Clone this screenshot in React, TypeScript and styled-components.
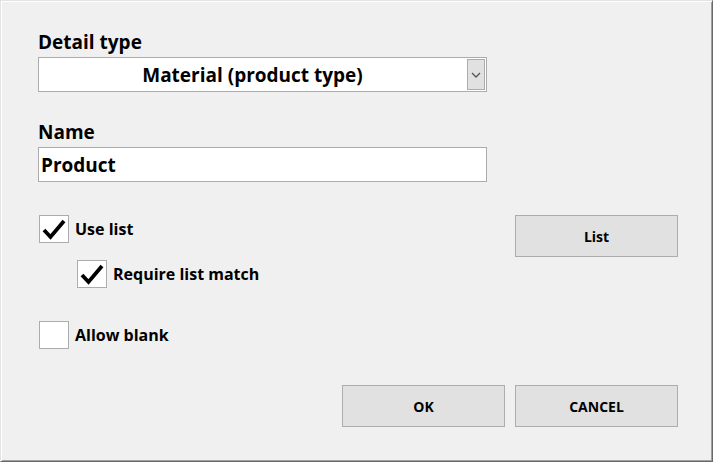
import React, { useState } from 'react'
import styled, { createGlobalStyle } from 'styled-components'

const GlobalStyle = createGlobalStyle`
  html, body {
    margin: 0;
    padding: 0;
    background: #f0f0f0;
  }
  * {
    box-sizing: border-box;
  }
`

function CheckMark() {
  return (
    <svg width="24" height="22" viewBox="0 0 24 22">
      <path d="M2 12 L8.5 19 L22 3" fill="none" stroke="#000" strokeWidth="3.8" strokeLinejoin="miter" />
    </svg>
  )
}

function Chevron() {
  return (
    <svg width="10" height="6" viewBox="0 0 10 6">
      <path d="M1 1 L5 5 L9 1" fill="none" stroke="#555" strokeWidth="1.3" />
    </svg>
  )
}

type CheckProps = {
  label: string
  checked: boolean
  onToggle: () => void
}

function CheckOption({ label, checked, onToggle }: CheckProps) {
  return (
    <CheckRow onClick={onToggle}>
      <CheckBox>{checked && <CheckMark />}</CheckBox>
      <CheckLabel>{label}</CheckLabel>
    </CheckRow>
  )
}

export default function App() {
  const [useList, setUseList] = useState(true)
  const [requireMatch, setRequireMatch] = useState(true)
  const [allowBlank, setAllowBlank] = useState(false)
  const [name, setName] = useState('Product')

  return (
    <>
      <GlobalStyle />
      <Window>
        <Field>
          <FieldLabel>Detail type</FieldLabel>
          <Combo>
            <ComboText>Material (product type)</ComboText>
            <ComboButton>
              <Chevron />
            </ComboButton>
          </Combo>
        </Field>

        <Field>
          <FieldLabel>Name</FieldLabel>
          <TextBox value={name} onChange={(e) => setName(e.target.value)} />
        </Field>

        <Options>
          <OptionList>
            <CheckOption label="Use list" checked={useList} onToggle={() => setUseList(v => !v)} />
            <Indented>
              <CheckOption label="Require list match" checked={requireMatch} onToggle={() => setRequireMatch(v => !v)} />
            </Indented>
            <Spaced>
              <CheckOption label="Allow blank" checked={allowBlank} onToggle={() => setAllowBlank(v => !v)} />
            </Spaced>
          </OptionList>
          <DialogButton>List</DialogButton>
        </Options>

        <Footer>
          <DialogButton>OK</DialogButton>
          <DialogButton>CANCEL</DialogButton>
        </Footer>
      </Window>
    </>
  )
}

const Window = styled.div`
  width: 713px;
  height: 462px;
  background: #f0f0f0;
  border-top: 1px solid #e3e3e3;
  border-left: 1px solid #e3e3e3;
  border-right: 1px solid #696969;
  border-bottom: 1px solid #696969;
  box-shadow: inset 1px 1px 0 #ffffff, inset -1px -1px 0 #a0a0a0;
  padding: 27px 0 0 37px;
  display: flex;
  flex-direction: column;
  gap: 26px;
  font-family: 'Open Sans', 'Noto Sans', sans-serif;
  color: #000;
`

const Field = styled.div`
  display: flex;
  flex-direction: column;
  width: 449px;
`

const FieldLabel = styled.div`
  font-size: 19px;
  font-weight: 700;
  line-height: 29px;
`

const Combo = styled.div`
  position: relative;
  height: 35px;
  background: #fff;
  border: 1px solid #acacac;
  display: flex;
  align-items: center;
  justify-content: center;
`

const ComboText = styled.span`
  font-size: 19px;
  font-weight: 700;
  padding-right: 20px;
`

const ComboButton = styled.div`
  position: absolute;
  top: 1px;
  right: 1px;
  width: 18px;
  height: 31px;
  background: #e1e1e1;
  border: 1px solid #acacac;
  display: flex;
  align-items: center;
  justify-content: center;
`

const TextBox = styled.input`
  height: 35px;
  background: #fff;
  border: 1px solid #acacac;
  padding: 0 2px;
  font-family: inherit;
  font-size: 19px;
  font-weight: 700;
  color: #000;
  outline: none;
`

const Options = styled.div`
  display: flex;
  align-items: flex-start;
  width: 640px;
  margin-top: 7px;
`

const OptionList = styled.div`
  display: flex;
  flex-direction: column;
  flex: 1;
  padding-left: 1px;
`

const Indented = styled.div`
  margin-top: 17px;
  padding-left: 38px;
`

const Spaced = styled.div`
  margin-top: 33px;
`

const CheckRow = styled.div`
  display: flex;
  align-items: center;
  gap: 6px;
  cursor: pointer;
`

const CheckBox = styled.div`
  width: 30px;
  height: 28px;
  background: #fff;
  border: 1px solid #acacac;
  display: flex;
  align-items: center;
  justify-content: center;
`

const CheckLabel = styled.span`
  font-size: 16px;
  font-weight: 700;
`

const DialogButton = styled.button`
  width: 163px;
  height: 42px;
  background: #e1e1e1;
  border: 1px solid #adadad;
  font-family: inherit;
  font-size: 14px;
  font-weight: 700;
  color: #000;
  padding: 0;
`

const Footer = styled.div`
  display: flex;
  justify-content: flex-end;
  gap: 10px;
  width: 640px;
  margin-top: 10px;
`
